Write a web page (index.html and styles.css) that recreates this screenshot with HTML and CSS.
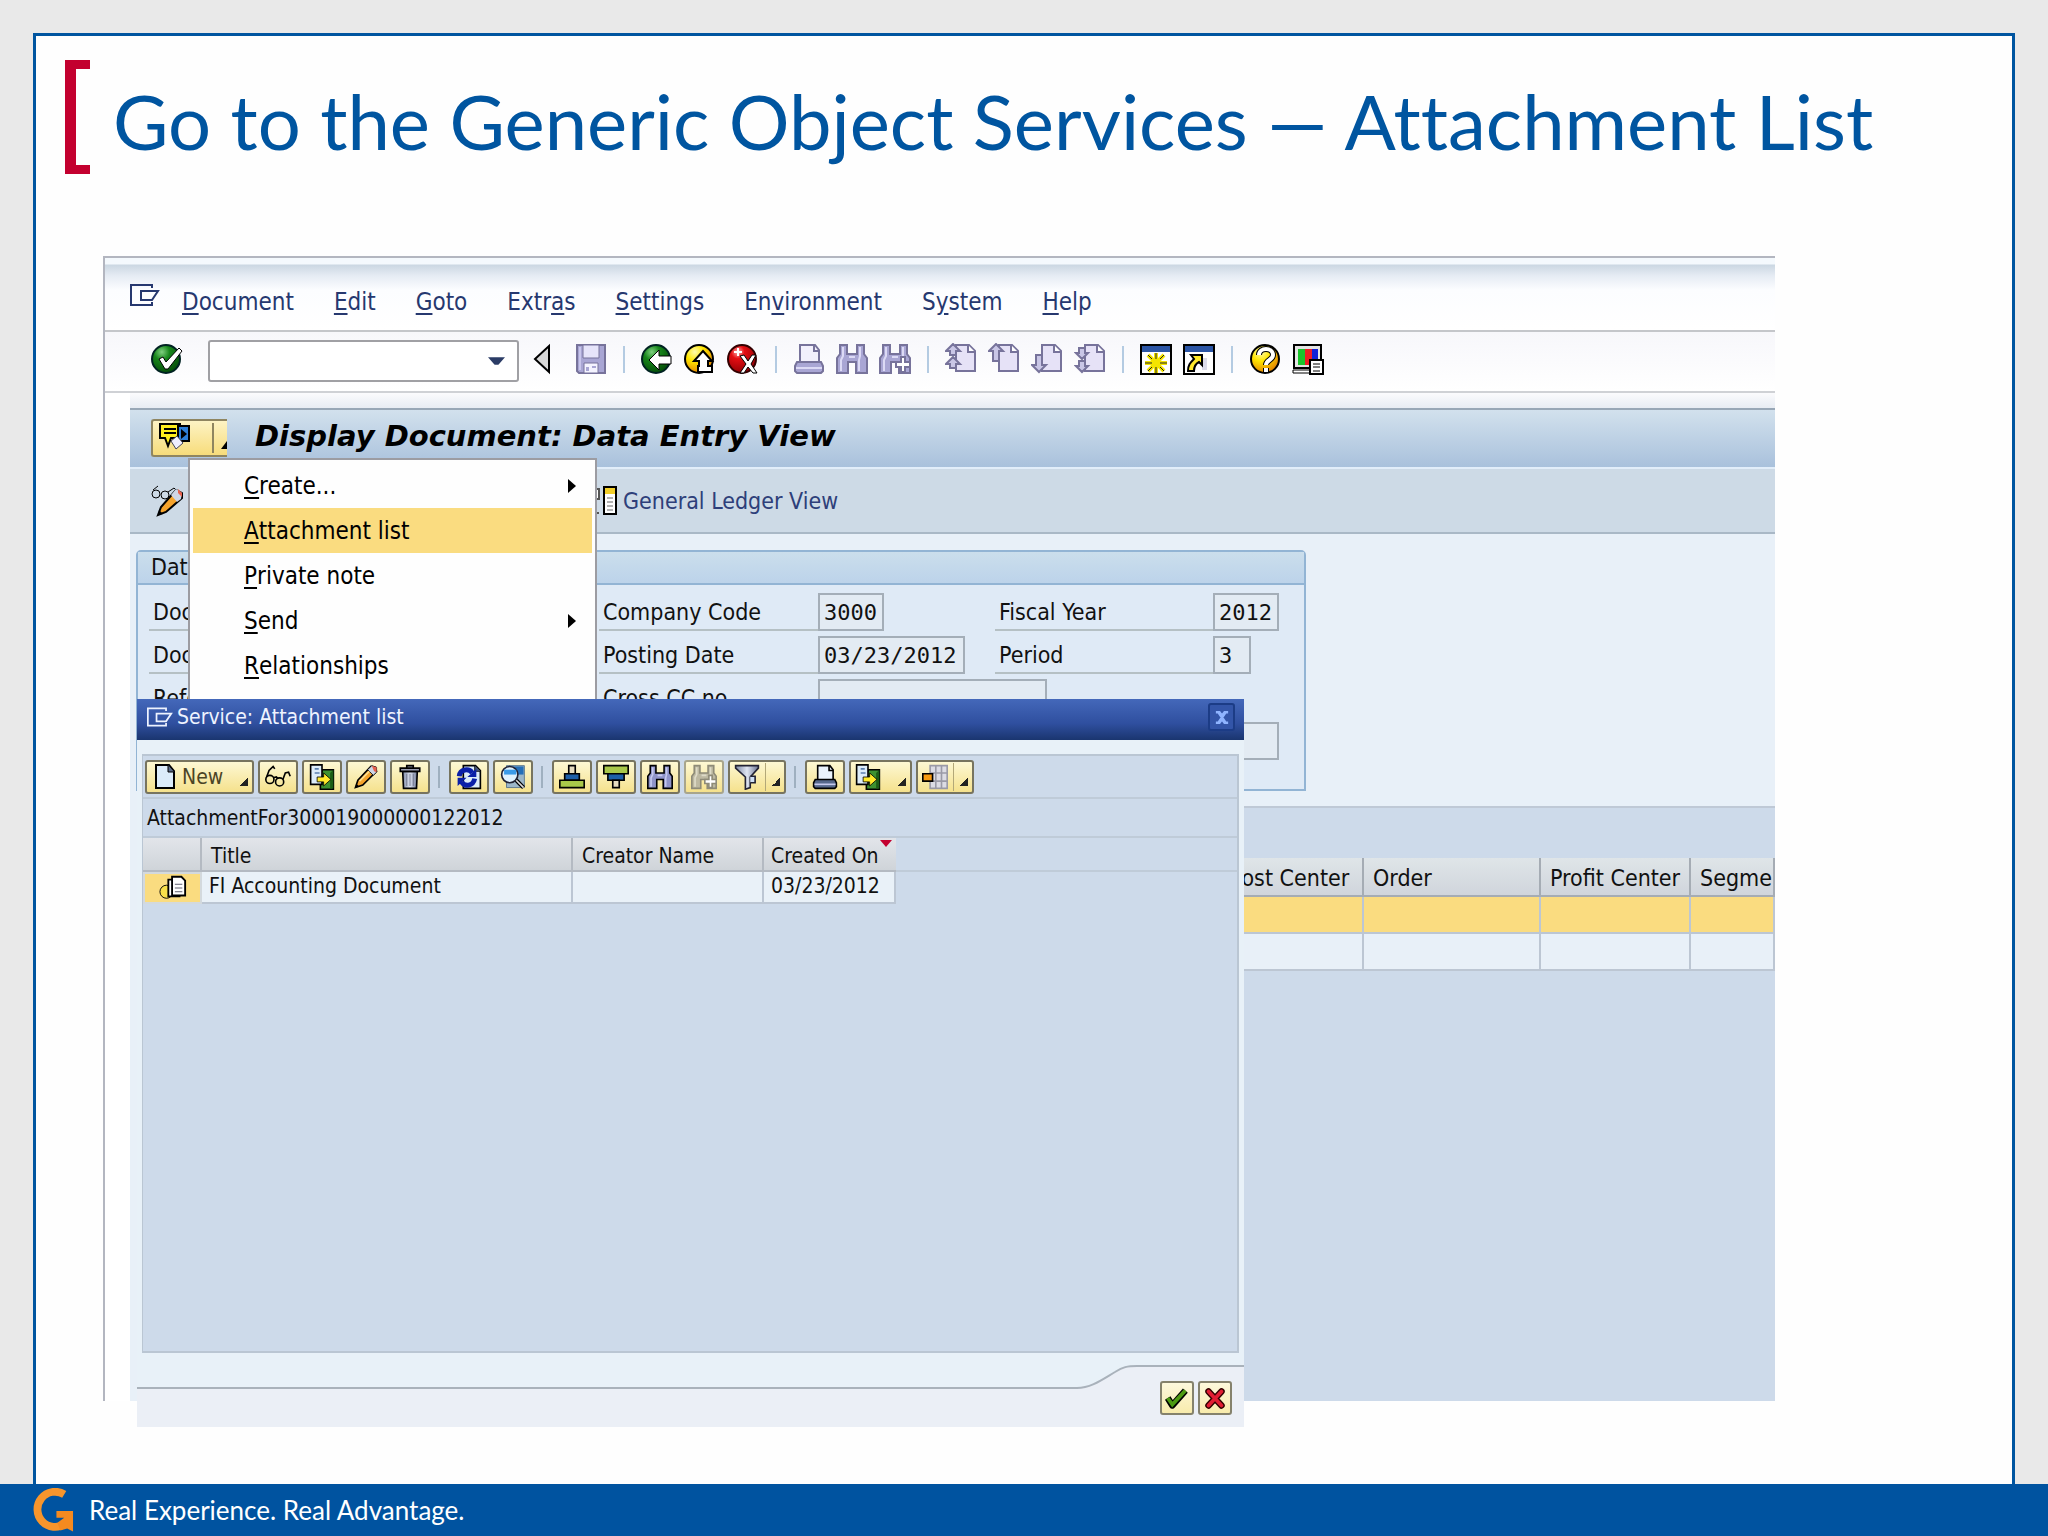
FILE: index.html
```
<!DOCTYPE html>
<html lang="en">
<head>
    <meta charset="utf-8">
    <title>Go to the Generic Object Services — Attachment List</title>
    <meta name="viewport" content="width=device-width, initial-scale=1.0">
    <link rel="stylesheet" href="styles.css">
</head>
<body>

    <!-- Shared icons -->
    <svg class="sprite" aria-hidden="true">
        <defs>
            <radialGradient id="gGreen" cx="35%" cy="25%" r="80%"><stop offset="0" stop-color="#7fd07f"/><stop offset=".35" stop-color="#17861b"/><stop offset="1" stop-color="#044a08"/></radialGradient>
            <radialGradient id="gYellow" cx="35%" cy="25%" r="80%"><stop offset="0" stop-color="#fffbb0"/><stop offset=".4" stop-color="#ffe600"/><stop offset="1" stop-color="#e07b00"/></radialGradient>
            <radialGradient id="gRed" cx="35%" cy="25%" r="80%"><stop offset="0" stop-color="#ffb0b0"/><stop offset=".3" stop-color="#e50d12"/><stop offset="1" stop-color="#8c0004"/></radialGradient>
            <linearGradient id="gMetal"><stop offset="0" stop-color="#7d88a4"/><stop offset=".5" stop-color="#dfe5f2"/><stop offset="1" stop-color="#6b7592"/></linearGradient>
        </defs>
        <symbol id="i-exit" viewBox="0 0 30 22">
            <path d="M22 4V1H1v20h21v-3M11 7h17l-6 9H11z" fill="none" stroke="currentColor" stroke-width="2"/>
        </symbol>
        <symbol id="i-binoculars" viewBox="0 0 32 32">
            <path d="M4 2h7v9h10V2h7v9l3 4v15H20V19h-8v11H1V15l3-4z" fill="var(--fill)" stroke="var(--line)" stroke-width="2"/>
            <path d="M7 4v9l-2 4v11M24 4v9l-1 4v11M13 14h6" fill="none" stroke="var(--shine)" stroke-width="2"/>
        </symbol>
        <symbol id="i-plus" viewBox="0 0 32 32">
            <path d="M22 14h4v5h5v5h-5v5h-4v-5h-5v-5h5z" fill="#fff" stroke="var(--line)" stroke-width="2"/>
        </symbol>
        <symbol id="i-printer" viewBox="0 0 32 32">
            <path d="M7 19V2h15l4 5v12" fill="var(--paper)" stroke="var(--line)" stroke-width="2"/>
            <path d="M21 2v6h5" fill="none" stroke="var(--line)" stroke-width="2"/>
            <path d="M4 19h24l2 4v5l-2 2H4l-2-2v-5z" fill="var(--fill)" stroke="var(--line)" stroke-width="2"/>
            <path d="M3 25h26" stroke="var(--shine)" stroke-width="2"/>
        </symbol>
        <symbol id="i-sheet" viewBox="0 0 32 32">
            <path d="M11 2h13l6 6v20H11z" fill="#e6e2f7" stroke="#77739b" stroke-width="2"/>
            <path d="M23 2v7h7" fill="#fff" stroke="#77739b" stroke-width="2"/>
        </symbol>
        <symbol id="i-export" viewBox="0 0 32 32">
            <path d="M17 7h13v24H14V12z" fill="#3d9130" stroke="#000" stroke-width="2"/>
            <path d="M30 7l-4 4v19h4z" fill="#1c5c16"/>
            <path d="M2 1h14v24H2z" fill="#dcecfa" stroke="#000" stroke-width="2"/>
            <path d="M7 6h5M7 11h6" stroke="#5b7fae" stroke-width="2"/>
            <path d="M10 16h8v-5l9 8-9 8v-5h-8z" fill="#ffe92b" stroke="#000" stroke-width="1"/>
        </symbol>
        <symbol id="i-pencil" viewBox="0 0 32 32">
            <path d="M3 29l3-9L22 3l5 1 2 5-17 17z" fill="#f5a32c" stroke="#000" stroke-width="2"/>
            <path d="M18 7l5-5 6 2v6l-4 4z" fill="#cfd6e6" stroke="#000" stroke-width="1"/>
            <path d="M23 2l6 2v6l-3-1z" fill="#e8624e"/>
            <path d="M8 21L20 9" stroke="#ffe08f" stroke-width="2"/>
            <path d="M3 29l1-5 4 4z"/>
        </symbol>
        <symbol id="i-glasses" viewBox="0 0 32 32">
            <g fill="none" stroke="#000" stroke-width="2">
                <circle cx="6" cy="19" r="5"/><circle cx="18" cy="22" r="5"/>
                <path d="M10 17l4-1 2 2M2 16l3-8 5-5 2 3M22 19l3-8 4-1 2 5"/>
            </g>
        </symbol>
    </svg>

    <div class="slide">
        <header class="slideHeader">
            <div class="bracket"></div>
            <h1>Go to the Generic Object Services — Attachment List</h1>
        </header>

        <main class="stage">
            <div class="window">
                <nav class="menuBar">
                    <svg class="menuIcon"><use href="#i-exit"/></svg>
                    <a href="#"><u>D</u>ocument</a>
                    <a href="#"><u>E</u>dit</a>
                    <a href="#"><u>G</u>oto</a>
                    <a href="#">Extr<u>a</u>s</a>
                    <a href="#"><u>S</u>ettings</a>
                    <a href="#">En<u>v</u>ironment</a>
                    <a href="#">S<u>y</u>stem</a>
                    <a href="#"><u>H</u>elp</a>
                </nav>

                <div class="toolBar">
                    <button class="iconButton" aria-label="Enter">
                        <svg viewBox="0 0 32 32"><circle cx="15" cy="16" r="14" fill="url(#gGreen)" stroke="#022" stroke-width="2"/><path d="M8 16l4-2 3 5L28 5l3 3-14 18h-3z" fill="#fff" stroke="#000" stroke-width="1"/></svg>
                    </button>
                    <div class="commandBox">
                        <input type="text" aria-label="Command">
                        <svg viewBox="0 0 18 10"><path d="M0 1h18l-7 8H7z" fill="#2b3c66"/></svg>
                    </div>
                    <button class="iconButton narrow" aria-label="Hide command field">
                        <svg viewBox="0 0 20 32"><path d="M17 3v26L3 16z" fill="#d9d9d9" stroke="#000" stroke-width="2"/></svg>
                    </button>
                    <button class="iconButton" aria-label="Save">
                        <svg viewBox="0 0 32 32"><path d="M2 2h28v28H4l-2-2z" fill="#a9a6d4" stroke="#77739b" stroke-width="2"/><path d="M8 2h16v13H8z" fill="#e6e4fa" stroke="#77739b" stroke-width="1"/><path d="M9 20h14v10H9z" fill="#f4f3ff" stroke="#77739b"/><path d="M11 24h3v4h-3zM17 23h4v2h-4z" fill="#a9a6d4"/><path d="M5 4v23" stroke="#c9c6ec" stroke-width="2"/></svg>
                    </button>
                    <span class="sep"></span>
                    <button class="iconButton" aria-label="Back">
                        <svg viewBox="0 0 32 32"><circle cx="15" cy="16" r="14" fill="url(#gGreen)" stroke="#022" stroke-width="2"/><path d="M8 17l10-10v6h12v8H18v6z" fill="#fff" stroke="#000" stroke-width="1"/></svg>
                    </button>
                    <button class="iconButton" aria-label="Exit">
                        <svg viewBox="0 0 32 32"><circle cx="15" cy="16" r="14" fill="url(#gYellow)" stroke="#000" stroke-width="2"/><path d="M19 8l9 10h-4v5h4v6H14v-6h1v-5h-5z" fill="#fff" stroke="#000" stroke-width="2"/></svg>
                    </button>
                    <button class="iconButton" aria-label="Cancel">
                        <svg viewBox="0 0 32 32"><circle cx="15" cy="16" r="14" fill="url(#gRed)" stroke="#300" stroke-width="2"/><path d="M13 13l4-1 4 6 4-6h4l-5 9 6 9h-4l-5-6-4 6h-4l6-9z" fill="#fff" stroke="#000" stroke-width="1"/><path d="M7 9h8M11 5v8" stroke="#fff" stroke-width="2"/></svg>
                    </button>
                    <span class="sep"></span>
                    <button class="iconButton muted" aria-label="Print"><svg><use href="#i-printer"/></svg></button>
                    <button class="iconButton muted" aria-label="Find"><svg><use href="#i-binoculars"/></svg></button>
                    <button class="iconButton muted" aria-label="Find next"><svg><use href="#i-binoculars"/><use href="#i-plus"/></svg></button>
                    <span class="sep"></span>
                    <button class="iconButton" aria-label="First page">
                        <svg viewBox="0 0 32 32"><use href="#i-sheet"/><path d="M8 1l7 7h-4v4H5V8H1zM8 14l7 7h-4v4H5v-4H1z" fill="#c9c6e6" stroke="#77739b" stroke-width="2"/></svg>
                    </button>
                    <button class="iconButton" aria-label="Previous page">
                        <svg viewBox="0 0 32 32"><use href="#i-sheet"/><path d="M8 1l7 7h-4v10H5V8H1z" fill="#c9c6e6" stroke="#77739b" stroke-width="2"/></svg>
                    </button>
                    <button class="iconButton" aria-label="Next page">
                        <svg viewBox="0 0 32 32"><use href="#i-sheet"/><path d="M8 29l7-7h-4V12H5v10H1z" fill="#c9c6e6" stroke="#77739b" stroke-width="2"/></svg>
                    </button>
                    <button class="iconButton" aria-label="Last page">
                        <svg viewBox="0 0 32 32"><use href="#i-sheet"/><path d="M8 16l6-6h-3V5H5v5H2zM8 29l6-6h-3v-5H5v5H2z" fill="#c9c6e6" stroke="#77739b" stroke-width="2"/></svg>
                    </button>
                    <span class="sep"></span>
                    <button class="iconButton" aria-label="Create session">
                        <svg viewBox="0 0 32 32"><path d="M1 2h30v29H1z" fill="#fff" stroke="#000" stroke-width="2"/><path d="M2 3h28v6H2z" fill="#2b55a5"/><path d="M16 10v20M5 20h22M8 12l16 16M24 12L8 28" stroke="#f4e400" stroke-width="4"/><path d="M16 10v6M16 24v6M5 20h7M20 20h7M8 12l4 4M24 12l-4 4M8 28l4-4M24 28l-4-4" stroke="#222" stroke-width="1"/></svg>
                    </button>
                    <button class="iconButton" aria-label="Create shortcut">
                        <svg viewBox="0 0 32 32"><path d="M1 2h30v29H1z" fill="#fff" stroke="#000" stroke-width="2"/><path d="M2 3h28v6H2z" fill="#2b55a5"/><path d="M19 15h5v12h-5z" fill="#dcdcea"/><path d="M8 12h11v10l-3-3c-4 2-5 5-5 9H5c0-6 2-8 6-12z" fill="#ffe92b" stroke="#000" stroke-width="2"/></svg>
                    </button>
                    <span class="sep"></span>
                    <button class="iconButton" aria-label="Help">
                        <svg viewBox="0 0 32 32"><circle cx="16" cy="16" r="14" fill="url(#gYellow)" stroke="#000" stroke-width="2"/><path d="M10 12c0-8 14-8 14 0 0 5-7 5-7 10M17 25v5" fill="none" stroke="#000" stroke-width="6"/><path d="M10 12c0-8 14-8 14 0 0 5-7 5-7 10M17 25v4" fill="none" stroke="#fff" stroke-width="4"/></svg>
                    </button>
                    <button class="iconButton" aria-label="Layout menu">
                        <svg viewBox="0 0 32 32"><path d="M2 2h27v23H2z" fill="#e4e4e4" stroke="#000" stroke-width="2"/><path d="M6 6h7v16H6z" fill="#19c42b"/><path d="M13 6h7v16h-7z" fill="#ee1c24"/><path d="M20 6h6v16h-6z" fill="#1020d8"/><path d="M1 27h17v3H1z" fill="#fff" stroke="#000" stroke-width="1"/><path d="M18 17h13v14H18z" fill="#fff" stroke="#000" stroke-width="2"/><path d="M21 21h7M21 24h7M21 28h7" stroke="#000" stroke-width="1"/></svg>
                    </button>
                </div>

                <div class="workArea">
                    <div class="titleBar">
                        <button class="servicesButton" aria-label="Services for object">
                            <svg viewBox="0 0 74 34"><path d="M7 3h20v14h-9l-3 8-3-8H7z" fill="#ffee1c" stroke="#000" stroke-width="2"/><path d="M11 8h12M11 12h12" stroke="#000" stroke-width="2"/><path d="M25 5h11v15H25z" fill="#2e7fd8" stroke="#000" stroke-width="2"/><path d="M28 8l6 5-6 5z"/><path d="M18 20l6-5 6 7-7 6z" fill="#eef" stroke="#445" stroke-width="1"/><path d="M60 2v30" stroke="#8f8560" stroke-width="2"/><path d="M74 20v8h-6z"/></svg>
                        </button>
                        <h2>Display Document: Data Entry View</h2>
                    </div>

                    <div class="appBar">
                        <button class="iconButton" aria-label="Display / change">
                            <svg viewBox="0 0 32 32"><g fill="none" stroke="#000" stroke-width="1"><circle cx="5" cy="9" r="4"/><circle cx="14" cy="10" r="4"/><path d="M2 5l5-4M17 7l6-4 3 3"/></g><path d="M7 30l3-8L25 5l6 3v5L15 27z" fill="#f5a32c" stroke="#000" stroke-width="2"/><path d="M20 10l5-6 6 4-1 6-4 3z" fill="#cfd6e6"/><path d="M27 4l4 4v4l-4-4z" fill="#e8624e"/><path d="M7 30l1-5 4 4z"/></svg>
                        </button>
                        <button class="ledgerButton">
                            <svg viewBox="0 0 32 32"><path d="M2 4h12v10H2zM5 28h3M11 28h3" fill="#fff" stroke="#555" stroke-width="2"/><path d="M19 2h12v27H19z" fill="#fff" stroke="#000" stroke-width="2"/><path d="M20 3h10v6H20z" fill="#f2cf2c"/><path d="M22 13h6M22 17h6M22 21h6M22 25h6" stroke="#666" stroke-width="1"/></svg>
                            General Ledger View
                        </button>
                    </div>

                    <section class="entryGroup">
                        <h3>Data Entry View</h3>
                        <div class="fields">
                            <label for="docNumber">Document Number</label>
                            <input id="docNumber" class="w10" readonly>
                            <label for="company">Company Code</label>
                            <input id="company" class="w4" value="3000" readonly>
                            <label for="year">Fiscal Year</label>
                            <input id="year" class="w4" value="2012" readonly>

                            <label for="docDate">Document Date</label>
                            <input id="docDate" class="w10" readonly>
                            <label for="posting">Posting Date</label>
                            <input id="posting" class="w10" value="03/23/2012" readonly>
                            <label for="period">Period</label>
                            <input id="period" class="w2" value="3" readonly>

                            <label for="reference">Reference</label>
                            <input id="reference" class="w10" readonly>
                            <label for="crossCc">Cross CC no.</label>
                            <input id="crossCc" class="w16" readonly>

                            <input class="w4 lastField" aria-label="Ledger Group" readonly>
                        </div>
                    </section>

                    <section class="items">
                        <table>
                            <colgroup><col class="colLead"><col class="colCost"><col class="colOrder"><col class="colProfit"><col></colgroup>
                            <thead>
                                <tr><th></th><th>Cost Center</th><th>Order</th><th>Profit Center</th><th>Segment</th></tr>
                            </thead>
                            <tbody>
                                <tr class="selected"><td></td><td></td><td></td><td></td><td></td></tr>
                                <tr><td></td><td></td><td></td><td></td><td></td></tr>
                            </tbody>
                        </table>
                    </section>
                </div>
            </div>

            <!-- Services menu -->
            <ul class="popup">
                <li><u>C</u>reate...<i class="arrow"></i></li>
                <li class="active"><u>A</u>ttachment list</li>
                <li><u>P</u>rivate note</li>
                <li><u>S</u>end<i class="arrow"></i></li>
                <li><u>R</u>elationships</li>
                <li><u>W</u>orkflow</li>
            </ul>

            <!-- Attachment list dialog -->
            <div class="dialog" role="dialog" aria-labelledby="dialogTitle">
                <div class="dialogTitle">
                    <svg class="dialogIcon"><use href="#i-exit"/></svg>
                    <span id="dialogTitle">Service: Attachment list</span>
                    <button class="closeButton" aria-label="Close">
                        <svg viewBox="0 0 16 16"><path d="M1 2h4l3 4 3-4h4M1 14h4l3-4 3 4h4M4 2l8 12M12 2L4 14" fill="none" stroke="#8fb4ff" stroke-width="3"/></svg>
                    </button>
                </div>

                <div class="panel">
                    <div class="gridBar">
                        <button class="gridButton newButton">
                            <svg viewBox="0 0 22 26"><path d="M2 1h13l5 6v17H2z" fill="#dcecfa" stroke="#000" stroke-width="2"/><path d="M14 1v7h6" fill="#5a6b88" stroke="#000" stroke-width="1"/></svg>
                            New<i class="corner"></i>
                        </button>
                        <button class="gridButton" aria-label="Display"><svg><use href="#i-glasses"/></svg></button>
                        <button class="gridButton" aria-label="Export"><svg><use href="#i-export"/></svg></button>
                        <button class="gridButton" aria-label="Edit"><svg><use href="#i-pencil"/></svg></button>
                        <button class="gridButton" aria-label="Delete">
                            <svg viewBox="0 0 32 32"><path d="M7 9h18l-1 21H8z" fill="url(#gMetal)" stroke="#000" stroke-width="2"/><path d="M4 5h24v4H4zM12 2h8v3h-8z" fill="#9a9eb2" stroke="#000" stroke-width="2"/><path d="M12 12v15M16 12v15M20 12v15" stroke="#666b80" stroke-width="1"/></svg>
                        </button>
                        <span class="gridSep"></span>
                        <button class="gridButton" aria-label="Refresh">
                            <svg viewBox="0 0 32 32"><path d="M9 2h15l6 6v22H9z" fill="#dcecfa" stroke="#000" stroke-width="2"/><path d="M23 2v7h7" fill="#4a5a80" stroke="#000"/><path d="M4 15c1-9 12-10 16-4M23 18c-2 10-13 10-16 4" fill="none" stroke="#0a1fa8" stroke-width="6"/><path d="M14 16h11V6zM13 17H2v10z" fill="#0a1fa8"/></svg>
                        </button>
                        <button class="gridButton" aria-label="Details">
                            <svg viewBox="0 0 32 32"><path d="M8 2h22v27H8z" fill="#9db7c9" stroke="#4b6a86" stroke-width="1"/><path d="M9 3h20v10H9z" fill="#256fb8"/><circle cx="12" cy="13" r="10" fill="#dff2ff" stroke="#223" stroke-width="2"/><path d="M5 7h15v6H5z" fill="#3b9be8"/><path d="M20 20l9 9" stroke="#000" stroke-width="5"/><path d="M20 20l9 9" stroke="#ddd" stroke-width="2"/></svg>
                        </button>
                        <span class="gridSep"></span>
                        <button class="gridButton" aria-label="Sort ascending">
                            <svg viewBox="0 0 32 32"><g stroke="#000" stroke-width="2"><path d="M12 2h8v10h-8z" fill="#e6dcc0"/><path d="M7 12h18v8H7z" fill="#1d5fa8"/><path d="M1 20h30v9H1z" fill="#a9c84a"/></g></svg>
                        </button>
                        <button class="gridButton" aria-label="Sort descending">
                            <svg viewBox="0 0 32 32"><g stroke="#000" stroke-width="2"><path d="M1 2h30v10H1z" fill="#a9c84a"/><path d="M6 12h20v8H6z" fill="#1d5fa8"/><path d="M12 20h8v9h-8z" fill="#e6dcc0"/></g></svg>
                        </button>
                        <button class="gridButton find" aria-label="Find"><svg><use href="#i-binoculars"/></svg></button>
                        <button class="gridButton faded" aria-label="Find next"><svg><use href="#i-binoculars"/><use href="#i-plus"/></svg></button>
                        <button class="gridButton split" aria-label="Filter">
                            <svg viewBox="0 0 32 32"><path d="M2 2h28v3L20 16v13l-6 2V16L2 5z" fill="url(#gMetal)" stroke="#223" stroke-width="2"/><path d="M20 15h6v8h-6" fill="#cfe0f5" stroke="#223" stroke-width="2"/></svg>
                            <span class="bar"></span><i class="corner"></i>
                        </button>
                        <span class="gridSep"></span>
                        <button class="gridButton print" aria-label="Print"><svg><use href="#i-printer"/></svg></button>
                        <button class="gridButton splitWide" aria-label="Export list"><svg><use href="#i-export"/></svg><i class="corner"></i></button>
                        <button class="gridButton split" aria-label="Layout">
                            <svg viewBox="0 0 32 32"><path d="M10 2h21v28H10z" fill="#dcdce4" stroke="#9a9aa6" stroke-width="2"/><path d="M10 11h21M10 21h21M17 2v28M24 2v28" stroke="#9a9aa6" stroke-width="2"/><path d="M1 12h12v9H1z" fill="#f79a12" stroke="#000" stroke-width="2"/></svg>
                            <span class="bar"></span><i class="corner"></i>
                        </button>
                    </div>

                    <div class="caption">AttachmentFor300019000000122012</div>

                    <div class="gridHolder">
                        <table class="attachments">
                            <colgroup><col class="colIcon"><col class="colTitle"><col class="colCreator"><col class="colCreated"></colgroup>
                            <thead>
                                <tr><th></th><th>Title</th><th>Creator Name</th><th class="sorted">Created On</th></tr>
                            </thead>
                            <tbody>
                                <tr>
                                    <td class="typeCell">
                                        <svg viewBox="0 0 30 26"><circle cx="8" cy="17" r="7" fill="#f8e04a" stroke="#000"/><path d="M10 4h12v18H10z" fill="#fff" stroke="#000" stroke-width="2"/><path d="M14 1h10l4 4v16H14z" fill="#fff" stroke="#000" stroke-width="2"/><path d="M17 9h8M17 13h8M17 17h8" stroke="#556" stroke-width="1"/></svg>
                                    </td>
                                    <td>FI Accounting Document</td>
                                    <td></td>
                                    <td>03/23/2012</td>
                                </tr>
                            </tbody>
                        </table>
                    </div>
                </div>

                <div class="dialogFooter">
                    <div class="swoosh">
                        <span class="swooshLine"></span>
                        <svg viewBox="0 0 60 24"><path d="M0 24V23C14 23 26 14 38 7 46 2 50 1 60 1V24z" fill="#ebeff6"/><path d="M0 23C14 23 26 14 38 7 46 2 50 1 60 1" fill="none" stroke="#a9b2bb" stroke-width="2"/></svg>
                        <span class="swooshEnd"></span>
                    </div>
                    <div class="dialogButtons">
                        <button class="okButton" aria-label="Continue">
                            <svg viewBox="0 0 28 28"><path d="M4 14l5 8L23 6" fill="none" stroke="#000" stroke-width="7" stroke-linejoin="round"/><path d="M4 14l5 7L23 6" fill="none" stroke="#4c9a12" stroke-width="4"/></svg>
                        </button>
                        <button class="okButton" aria-label="Cancel">
                            <svg viewBox="0 0 28 28"><path d="M7 7l14 15M21 7L7 22" stroke="#300" stroke-width="7" stroke-linecap="round"/><path d="M7 7l14 15M21 7L7 22" stroke="#e11d33" stroke-width="4" stroke-linecap="round"/></svg>
                        </button>
                    </div>
                </div>
            </div>
        </main>
    </div>

    <footer class="slideFooter">
        <svg viewBox="0 0 42 44"><path d="M32 6A18 18 0 1 0 33 36" fill="none" stroke="#f7952c" stroke-width="8"/><path d="M24 23h17v21l-6-3-7 2-3-8 7-5h-8z" fill="#f58a1f"/></svg>
        <span>Real Experience. Real Advantage.</span>
    </footer>

</body>
</html>
```

FILE: styles.css
```
* {
    box-sizing: border-box;
}

body {
    display: flex;
    flex-direction: column;
    min-height: 100vh;
    margin: 0;
    background-color: #e9e9e9;
    font-family: "DejaVu Sans Condensed", "Noto Sans", sans-serif;
    font-size: 23px;
    color: #111;
}

h1, h2, h3, ul {
    margin: 0;
    padding: 0;
    font-weight: normal;
}

button, input {
    font: inherit;
    color: inherit;
    margin: 0;
    padding: 0;
    border: none;
    background: none;
}

button {
    cursor: pointer;
}

svg {
    display: block;
    flex: none;
}

.sprite {
    position: absolute;
    width: 0;
    height: 0;
}

/* Slide */
.slide {
    flex: 1;
    display: flex;
    flex-direction: column;
    margin: 33px 33px 0;
    border: 3px solid #0055a0;
    border-bottom: none;
    background-color: #fefefe;
}

.slideHeader {
    display: flex;
    padding: 24px 29px 0;
}

.bracket {
    flex: none;
    width: 25px;
    height: 114px;
    border: solid #c3002f;
    border-width: 9px 0 9px 11px;
}

h1 {
    margin-left: 23px;
    font-family: Lato, sans-serif;
    font-size: 76px;
    font-variant-ligatures: none;
    line-height: 122px;
    white-space: nowrap;
    color: #0055a0;
}

.stage {
    position: relative;
    flex: 1;
    display: flex;
    margin: 74px 237px 83px 67px;
}

.slideFooter {
    display: flex;
    align-items: center;
    gap: 15px;
    height: 52px;
    padding-left: 33px;
    background-color: #0053a0;
    color: #fff;
    font-family: Lato, sans-serif;
    font-size: 26px;
}

.slideFooter svg {
    width: 41px;
    height: 44px;
}

/* Main window */
.window {
    flex: 1;
    min-width: 0;
    display: flex;
    flex-direction: column;
    overflow: hidden;
    border: solid #b3b6c0;
    border-width: 2px 0 0 2px;
    background-color: #fff;
}

.menuBar {
    display: flex;
    align-items: center;
    gap: 40px;
    height: 74px;
    padding: 16px 25px 0;
    border-bottom: 2px solid #c4c6ca;
    background: linear-gradient(#f4f9fd 0, #f4f9fd 6px, #cbd7e2 7px, #e6ecf4 18px, #fcfdff 32px, #fff 100%);
    font-size: 24px;
}

.menuBar a {
    color: #26386f;
    text-decoration: none;
}

u {
    text-underline-offset: 3px;
    text-decoration-thickness: 2px;
}

.menuIcon {
    width: 30px;
    height: 22px;
    margin: -14px -18px 0 0;
    color: #26386f;
}

.toolBar {
    display: flex;
    align-items: center;
    gap: 11px;
    height: 61px;
    padding: 0 46px 5px;
    border-bottom: 2px solid #cfd1d5;
    background: linear-gradient(#f7f7fb, #fff);
}

.iconButton,
.iconButton svg {
    width: 32px;
    height: 32px;
}

.iconButton.narrow,
.iconButton.narrow svg {
    width: 20px;
}

.iconButton.narrow {
    margin: 0 12px 0 2px;
}

.muted {
    --fill: #a9a6d4;
    --line: #77739b;
    --shine: #dcdaf5;
    --paper: #f2f0fc;
}

.commandBox {
    display: flex;
    align-items: center;
    width: 311px;
    height: 42px;
    margin: 4px 0 0 14px;
    padding-right: 12px;
    border: 2px solid #a0a0a4;
    border-radius: 3px;
    background-color: #fff;
}

.commandBox input {
    flex: 1;
    min-width: 0;
    height: 100%;
    outline: none;
}

.commandBox svg {
    width: 17px;
    height: 10px;
}

.sep {
    width: 2px;
    height: 27px;
    margin: 0 5px;
    background-color: #b4cbe2;
}

.workArea {
    flex: 1;
    display: flex;
    flex-direction: column;
    margin-left: 25px;
    padding-top: 15px;
    background: linear-gradient(#fbfbfd, #e6ebf2 16px, #e8f0f8 17px);
}

.titleBar {
    display: flex;
    align-items: center;
    gap: 28px;
    height: 61px;
    padding-left: 21px;
    border-top: 2px solid #98a7b6;
    border-bottom: 2px solid #e2eefa;
    background: linear-gradient(#d2e1ed, #a9c1dc);
}

.servicesButton {
    width: 76px;
    height: 38px;
    margin-bottom: 2px;
    border: 2px solid #8f8560;
    border-right: none;
    border-radius: 3px 0 0 3px;
    background: linear-gradient(#fdf3c4, #f7dc7b);
}

.servicesButton svg {
    width: 74px;
    height: 34px;
}

h2 {
    margin-bottom: 6px;
    font-family: "DejaVu Sans", sans-serif;
    font-size: 29px;
    font-weight: bold;
    font-style: italic;
    line-height: 36px;
    white-space: nowrap;
    color: #000;
}

.appBar {
    display: flex;
    align-items: center;
    height: 65px;
    padding-left: 21px;
    border-bottom: 2px solid #a9b8c6;
    background-color: #cddae6;
}

.ledgerButton {
    display: flex;
    align-items: center;
    gap: 6px;
    margin-left: 402px;
    color: #2e3f7a;
}

.ledgerButton svg {
    width: 32px;
    height: 32px;
}

.entryGroup {
    width: 1170px;
    margin: 16px 0 0 6px;
    padding-bottom: 29px;
    border: 2px solid #92b4d4;
    border-radius: 5px 5px 0 0;
    background: #dfeaf6;
}

h3 {
    height: 33px;
    padding-left: 13px;
    border-bottom: 2px solid #92b4d4;
    background: linear-gradient(#cbdeec, #bcd3ea);
    font-size: 23px;
    line-height: 31px;
}

.fields {
    display: grid;
    grid-template-columns: 230px 220px 219px 177px 218px 66px;
    grid-auto-rows: 38px;
    row-gap: 5px;
    padding: 8px 0 0 11px;
}

.fields label {
    padding-left: 4px;
    border-bottom: 2px solid #b5c0c4;
    line-height: 39px;
    white-space: nowrap;
}

.fields input {
    height: 38px;
    padding-left: 4px;
    border: 2px solid #a4aeb8;
    background-color: #e3ebf3;
    font-family: "DejaVu Sans Mono", monospace;
    font-size: 22px;
}

.fields .w2 { width: 38px; }
.fields .w4 { width: 66px; }
.fields .w10 { width: 147px; }
.fields .w16 { width: 229px; }

.fields .lastField {
    grid-column: 6;
    grid-row: 4;
}

.items {
    flex: 1;
    margin: 15px 0 0 8px;
    padding-top: 50px;
    border-top: 2px solid #bfc9d6;
    background-color: #cddaea;
}

table {
    border-collapse: separate;
    border-spacing: 0;
    table-layout: fixed;
}

th {
    font-weight: normal;
    text-align: left;
    white-space: nowrap;
    overflow: hidden;
}

.items table {
    width: 100%;
}

.items th {
    height: 39px;
    padding: 2px 0 0 9px;
    border: solid #a5acb4;
    border-width: 0 2px 2px 0;
    background: linear-gradient(#dfe5e8, #d0d5dc);
}

.items td {
    height: 37px;
    border: solid #bcc6d3;
    border-width: 0 2px 2px 0;
    background-color: #e8f0f8;
}

.items .selected td {
    background-color: #fadc80;
}

.colLead { width: 1080px; }
.colCost { width: 146px; }
.colOrder { width: 177px; }
.colProfit { width: 150px; }

/* Services menu */
.popup {
    position: absolute;
    top: 202px;
    left: 85px;
    width: 409px;
    padding: 3px;
    border: 2px solid #9c9ca2;
    background-color: #fefefe;
    list-style: none;
    font-size: 24px;
    color: #000;
}

.popup li {
    display: flex;
    align-items: center;
    height: 45px;
    padding: 0 16px 0 51px;
}

.popup .active {
    background-color: #fadc80;
}

.arrow {
    margin-left: auto;
    border: solid transparent;
    border-width: 7px 0 7px 8px;
    border-left-color: #000;
}

/* Dialog */
.dialog {
    position: absolute;
    top: 443px;
    right: 531px;
    bottom: -26px;
    left: 34px;
    display: flex;
    flex-direction: column;
    background-color: #e8f1f8;
    font-size: 21px;
}

.dialogTitle {
    display: flex;
    align-items: center;
    height: 41px;
    padding: 0 9px 5px 10px;
    background: linear-gradient(#4468ba, #2f4f9f 60%, #1a356f);
    color: #eef3ff;
}

.dialogIcon {
    width: 26px;
    height: 20px;
    margin-right: 4px;
}

.closeButton {
    display: grid;
    place-items: center;
    width: 27px;
    height: 28px;
    margin-left: auto;
    border: 2px solid #1c3c86;
    border-radius: 3px;
    background-color: #3355a8;
}

.closeButton svg {
    width: 14px;
    height: 15px;
}

.panel {
    flex: 1;
    margin: 14px 5px 0;
    border: 2px solid #bac6d3;
    border-left-width: 1px;
    background-color: #cddaea;
}

.gridBar {
    display: flex;
    align-items: center;
    gap: 4px;
    height: 43px;
    padding: 0 2px;
    border-bottom: 2px solid #bfcbd8;
}

.gridButton {
    display: flex;
    align-items: center;
    justify-content: center;
    flex: none;
    width: 40px;
    height: 34px;
    position: relative;
    border: 2px solid #77745f;
    border-radius: 3px;
    background: linear-gradient(#fdf8d4, #f5e18c);
    color: #4b4426;
    --fill: #8f93c8;
    --line: #000;
    --shine: #c5c9ee;
    --paper: #eaf3fc;
}

.gridButton svg {
    width: 26px;
    height: 26px;
}

.gridButton.newButton {
    justify-content: flex-start;
    gap: 6px;
    width: 109px;
    padding-left: 7px;
}

.newButton svg {
    width: 22px;
}

.gridButton.faded {
    border-color: #a8a58c;
    --fill: #bdb9a2;
    --line: #8e8b78;
    --shine: #dedbc8;
}

.gridButton.print {
    --fill: #56688c;
}

.gridButton.split,
.gridButton.splitWide {
    justify-content: flex-start;
    width: 58px;
    padding-left: 4px;
}

.gridButton.splitWide {
    width: 63px;
}

.split .bar {
    width: 1px;
    height: 28px;
    margin-left: 5px;
    background-color: #b3a878;
}

.corner {
    position: absolute;
    right: 4px;
    bottom: 6px;
    width: 8px;
    height: 8px;
    background: linear-gradient(135deg, transparent 50%, #222 50%);
}

.gridSep {
    width: 11px;
    height: 22px;
    background: linear-gradient(#9fb0c0, #9fb0c0) 4px 0 / 2px 100% no-repeat;
}

.caption {
    height: 39px;
    padding-left: 4px;
    border-bottom: 2px solid #bfcbd8;
    line-height: 39px;
}

.gridHolder {
    background: linear-gradient(#bfcbd8, #bfcbd8) 0 32px / 100% 2px no-repeat;
}

.attachments {
    width: 753px;
}

.attachments th {
    height: 34px;
    padding: 3px 0 0 9px;
    border: solid #b4bac2;
    border-width: 0 2px 2px 0;
    background: linear-gradient(#e2e5ea, #cfd4d9);
}

.attachments td {
    height: 32px;
    padding: 0 0 3px 7px;
    border: solid #bcc6d3;
    border-width: 0 2px 2px 0;
    background-color: #e9f1f8;
}

.attachments .typeCell {
    padding: 0 0 0 14px;
    border: 2px solid #d3d9dd;
    background-color: #fadc80;
}

.typeCell svg {
    width: 28px;
    height: 26px;
}

.attachments .sorted {
    border-right: none;
    padding-left: 7px;
    position: relative;
}

.sorted::after {
    content: "";
    position: absolute;
    top: 2px;
    right: 4px;
    border: solid transparent;
    border-width: 7px 6px 0;
    border-top-color: #c3002f;
}

.colIcon { width: 59px; }
.colTitle { width: 371px; }
.colCreator { width: 191px; }
.colCreated { width: 132px; }

.dialogFooter {
    display: flex;
    flex-direction: column;
    height: 74px;
    padding-top: 12px;
}

.swoosh {
    display: flex;
    height: 24px;
}

.swooshLine {
    flex: 1;
    border-bottom: 2px solid #a9b2bb;
}

.swoosh svg {
    width: 60px;
    height: 24px;
}

.swooshEnd {
    width: 107px;
    border-top: 2px solid #a9b2bb;
    background-color: #ebeff6;
}

.dialogButtons {
    flex: 1;
    display: flex;
    justify-content: flex-end;
    gap: 4px;
    padding-right: 12px;
    background-color: #ebeff6;
}

.okButton {
    display: grid;
    place-items: center;
    width: 34px;
    height: 34px;
    margin-top: -8px;
    border: 2px solid #85826c;
    border-radius: 3px;
    background: linear-gradient(#fdf8dc, #f8ebac);
}

.okButton svg {
    width: 26px;
    height: 26px;
}
```
